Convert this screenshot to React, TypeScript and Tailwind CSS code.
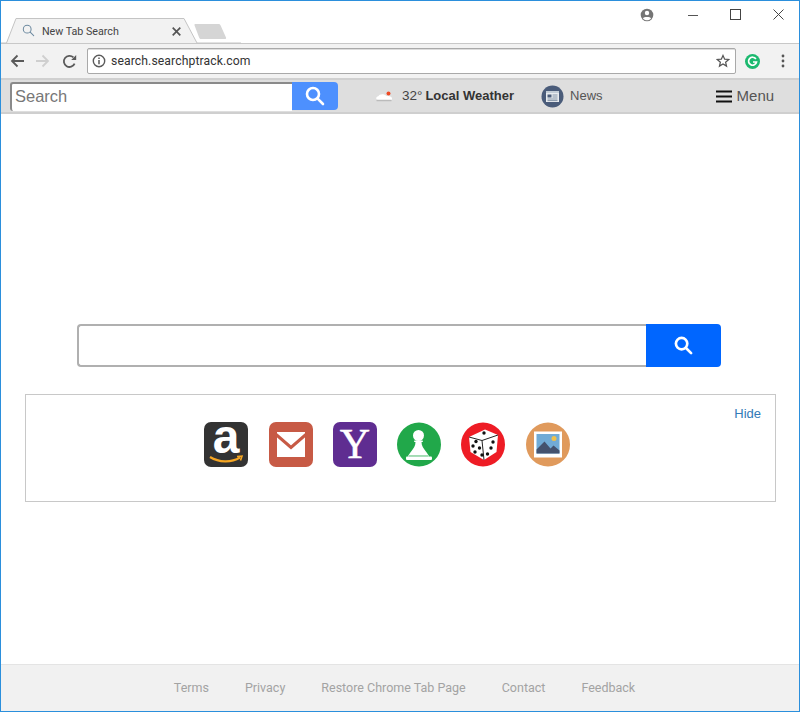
import React from "react";

const Sans = "font-['Liberation_Sans',Arial,sans-serif]";

function Glass({ size, color, sw = 2.6 }: { size: number; color: string; sw?: number }) {
  return (
    <svg width={size} height={size} viewBox="0 0 20 20" fill="none" stroke={color} strokeWidth={sw} strokeLinecap="round">
      <circle cx="8" cy="8" r="6" />
      <path d="M12.6 12.6L18 18" />
    </svg>
  );
}

function TabStrip() {
  return (
    <div className="relative h-[42px] shrink-0 bg-white">
      <svg className="absolute left-0 top-[16px]" width="240" height="27" viewBox="0 0 240 27">
        <path d="M-1 26H5.5L15 1.500H183L196 26H240" fill="#f2f2f2" stroke="#c4c4c4" strokeWidth="1" />
        <path d="M194.500 7c-.8 0-1.200.5-1 1.200l4.500 12c.4 1 1 1.800 2 1.800h24c1 0 1.400-.8 1-1.600l-5.500-12.200c-.4-.8-1-1.200-1.800-1.200z" fill="#d5d5d5" />
      </svg>
      <div className="relative flex h-[42px] items-start pl-[21px] pt-[22px]">
        <span className="mt-px"><Glass size={13} color="#6d8aa0" sw={1.6} /></span>
        <span className="ml-[7px] font-['Roboto',sans-serif] text-[10.7px] leading-[17px] text-[#444]">New Tab Search</span>
        <svg className="ml-[53px] mt-[4px]" width="9" height="9" viewBox="0 0 9 9" stroke="#555" strokeWidth="1.7">
          <path d="M.7.7l7.600 7.600M8.300.7L.7 8.300" />
        </svg>
      </div>
      <div className="absolute right-[145px] top-[7px]">
        <svg width="14" height="14" viewBox="0 0 14 14">
          <circle cx="7" cy="7" r="6.300" fill="#757575" />
          <circle cx="7" cy="5" r="2.200" fill="#fff" />
          <path d="M2.900 10.200c1-1.600 7.200-1.600 8.200 0-1 1.400-2.400 2.100-4.100 2.100s-3.100-.7-4.100-2.100z" fill="#fff" />
        </svg>
      </div>
      <div className="absolute right-[15px] top-[8px] flex items-center gap-[32px]">
        <svg width="10" height="10" viewBox="0 0 10 10"><path d="M0 5.500h10" stroke="#555" strokeWidth="1" /></svg>
        <svg width="11" height="11" viewBox="0 0 11 11"><rect x=".5" y=".5" width="10" height="10" fill="none" stroke="#444" strokeWidth="1" /></svg>
        <svg width="11" height="11" viewBox="0 0 11 11"><path d="M.5.5l10 10M10.500.5l-10 10" stroke="#444" strokeWidth="1" /></svg>
      </div>
    </div>
  );
}

function Toolbar() {
  return (
    <div className="flex h-[35px] shrink-0 items-center border-t border-[#c8c8c8] bg-[#f2f2f2] pl-[9px]">
      <svg width="14" height="14" viewBox="0 0 14 14" fill="none" stroke="#5a5a5a" strokeWidth="1.800">
        <path d="M14 7H2M7.500 1.500L2 7l5.500 5.500" />
      </svg>
      <svg className="ml-[12px]" width="14" height="14" viewBox="0 0 14 14" fill="none" stroke="#cfcfcf" strokeWidth="1.800">
        <path d="M0 7h12M6.500 1.500L12 7l-5.500 5.500" />
      </svg>
      <svg className="ml-[12px]" width="15" height="15" viewBox="0 0 15 15" fill="none">
        <path d="M12.600 9.600A5.600 5.600 0 1 1 11.400 3.400" stroke="#5a5a5a" strokeWidth="1.800" />
        <path d="M9.200 6h5V1z" fill="#5a5a5a" />
      </svg>
      <div className="ml-[10px] flex h-[26px] w-[649px] items-center rounded-[2px] border border-[#a9a9a9] bg-white pl-[4px] pr-[5px] shadow-[inset_0_1px_0_#ddd]">
        <svg width="14" height="14" viewBox="0 0 14 14" fill="none" stroke="#5a5a5a">
          <circle cx="7" cy="7" r="5.700" strokeWidth="1.400" />
          <path d="M7 6v4.200" strokeWidth="1.500" />
          <path d="M7 3.600v1.400" strokeWidth="1.500" />
        </svg>
        <span className="ml-[5px] font-['Roboto',sans-serif] text-[12.2px] text-[#333] tracking-[0.1px]">search.searchptrack.com</span>
        <svg className="ml-auto" width="14" height="14" viewBox="0 0 15 15" fill="none" stroke="#555" strokeWidth="1.300">
          <path d="M7.500 1.500l1.800 4 4.300.4-3.300 2.900 1 4.200-3.800-2.300-3.800 2.300 1-4.200L1.400 5.900l4.300-.4z" />
        </svg>
      </div>
      <svg className="ml-[9px]" width="15" height="15" viewBox="0 0 15 15">
        <circle cx="7.500" cy="7.500" r="7.500" fill="#1cb96f" />
        <path d="M10.900 5a4 4 0 1 0 .6 3H8" fill="none" stroke="#fff" strokeWidth="1.700" />
      </svg>
      <svg className="ml-[21px]" width="4" height="14" viewBox="0 0 4 14" fill="#555">
        <circle cx="2" cy="2" r="1.400" /><circle cx="2" cy="7" r="1.400" /><circle cx="2" cy="12" r="1.400" />
      </svg>
    </div>
  );
}

function SearchBar() {
  return (
    <div className={`flex h-[36px] shrink-0 items-center border-y-2 border-t-[#d0d0d0] border-b-[#cfcfcf] bg-[#dedede] pl-[9px] ${Sans}`}>
      <div className="flex h-[29px] w-[282px] items-center rounded-l-[3px] border-l-2 border-t-2 border-[#8a8a8a] bg-white pb-[2px] pl-[3px] text-[16.5px] text-[#777]">Search</div>
      <div className="flex h-[28px] w-[46px] items-center justify-center rounded-r-[4px] bg-[#4d90fe]">
        <Glass size={20} color="#fff" />
      </div>
      <svg className="ml-[37px]" width="18" height="14" viewBox="0 0 18 14">
        <circle cx="13.500" cy="4.500" r="2" fill="#ef4a24" />
        <path d="M3 11c-2.400 0-2.400-3.500.3-3.700C4.500 5 9 4.500 11.500 7c2.500 0 5.500.5 5.500 2.500S16 11 14.500 11z" fill="#fff" />
        <path d="M1.500 11.500h15" stroke="#bbb" strokeWidth="1.500" />
      </svg>
      <span className="ml-[9px] text-[13.5px] text-[#444]">32°</span>
      <span className="ml-[3px] text-[13px] font-bold text-[#333]">Local Weather</span>
      <svg className="ml-[27px]" width="23" height="23" viewBox="0 0 23 23">
        <circle cx="11.500" cy="11.500" r="11" fill="#4a5c7a" />
        <rect x="5" y="6" width="13" height="11" fill="#e8ecef" />
        <path d="M5 6h13v2H5z" fill="#c3cdd6" />
        <rect x="6.500" y="9.500" width="4" height="3" fill="#4a5c7a" />
        <path d="M11.500 10h5M11.500 12h5M6.500 14h10M6.500 15.600h10" stroke="#8696a8" strokeWidth="1" />
      </svg>
      <span className="ml-[6px] text-[13px] text-[#555]">News</span>
      <svg className="ml-[113px]" width="16" height="13" viewBox="0 0 16 13" fill="#111">
        <rect y="0.500" width="16" height="2" /><rect y="5.500" width="16" height="2" /><rect y="10.500" width="16" height="2" />
      </svg>
      <span className="ml-[5px] text-[15px] text-[#555]">Menu</span>
    </div>
  );
}

function Shortcuts() {
  return (
    <div className="flex">
      <svg className="overflow-visible" width="44" height="45" viewBox="0 0 44 45">
        <rect width="44" height="45" rx="7" fill="#333" />
        <text x="22" y="31" fontFamily="'Liberation Sans',sans-serif" fontSize="48" fontWeight="700" fill="#fff" textAnchor="middle">a</text>
        <path d="M6 35c9 5.500 21 6 30 .5" fill="none" stroke="#f5a623" strokeWidth="2.200" />
        <path d="M33 34.500l5-.3-1.500 4.300" fill="none" stroke="#f5a623" strokeWidth="1.600" />
      </svg>
      <svg className="ml-[21px]" width="44" height="45" viewBox="0 0 44 45">
        <rect width="44" height="45" rx="7" fill="#c75a45" />
        <rect x="8" y="10" width="28" height="25" fill="#fff" />
        <path d="M6.500 12L22 25.500L37.500 12" fill="none" stroke="#c75a45" strokeWidth="3" />
      </svg>
      <svg className="ml-[20px] overflow-visible" width="44" height="45" viewBox="0 0 44 45">
        <rect width="44" height="45" rx="7" fill="#5f2d91" />
        <text x="22" y="36" fontFamily="'Liberation Serif',serif" fontSize="42" fontWeight="400" fill="#fff" stroke="#fff" strokeWidth=".5" textAnchor="middle">Y</text>
      </svg>
      <svg className="ml-[20px]" width="44" height="45" viewBox="0 0 44 45">
        <circle cx="22" cy="22.500" r="22" fill="#21a84a" />
        <circle cx="21.500" cy="13.500" r="5.500" fill="#fff" />
        <rect x="17" y="18.500" width="9" height="1.500" rx=".7" fill="#fff" />
        <path d="M18.500 20h6c0 4 2 6.500 4 9 2 2.500 3 4 3.500 5.500H11c.5-1.500 1.500-3 3.500-5.500 2-2.500 4-5 4-9z" fill="#fff" />
        <rect x="9" y="34.500" width="26" height="3.500" rx="1" fill="#fff" />
        <path d="M12 33.800h19" stroke="#21a84a" strokeWidth=".6" />
      </svg>
      <svg className="ml-[20px]" width="44" height="45" viewBox="0 0 44 45">
        <circle cx="22" cy="22.500" r="22" fill="#ee1c25" />
        <path d="M8 15L24 7.500 37 13l-1.500 17L23 38 9.500 30z" fill="#fff" />
        <path d="M21 18.500L8 15M21 18.500L37 13M21 18.500L23 38" stroke="#222" strokeWidth="1" fill="none" />
        <g fill="#111">
          <circle cx="23" cy="11" r="1.700" /><circle cx="15" cy="19.500" r="1.700" /><circle cx="12" cy="24" r="1.700" />
          <circle cx="18.500" cy="26" r="1.700" /><circle cx="14" cy="30" r="1.700" /><circle cx="21" cy="33" r="1.700" />
          <circle cx="32" cy="20" r="1.700" /><circle cx="26.500" cy="32" r="1.700" /><circle cx="30" cy="26" r="1.700" />
        </g>
      </svg>
      <svg className="ml-[21px]" width="44" height="45" viewBox="0 0 44 45">
        <circle cx="22" cy="22.500" r="22" fill="#e09a5c" />
        <rect x="8" y="9.500" width="28" height="26" fill="#fff" />
        <rect x="10.500" y="12" width="23" height="19.500" fill="#71abd6" />
        <circle cx="28" cy="16.500" r="2.500" fill="#f0c14b" />
        <path d="M10.500 31.500v-4l8-8 6 7 3-3 6 5v3z" fill="#44526e" />
      </svg>
    </div>
  );
}

export default function App() {
  return (
    <div className={`flex h-[712px] w-[800px] flex-col overflow-hidden border border-[#2b8fdc] bg-white ${Sans}`}>
      <TabStrip />
      <Toolbar />
      <SearchBar />
      <main className="flex min-h-0 flex-1 flex-col pt-[210px]">
        <div className="ml-[76px] flex h-[43px] w-[644px]">
          <div className="flex-1 rounded-l-[4px] border-2 border-r-0 border-[#b0b0b0] bg-white" />
          <div className="flex w-[75px] items-center justify-center rounded-r-[4px] bg-[#0066ff]">
            <Glass size={19} color="#fff" sw={2.800} />
          </div>
        </div>
        <section className="relative ml-[24px] mt-[27px] flex h-[108px] w-[751px] items-start border border-[#c8c8c8] pl-[178px] pt-[27px]">
          <Shortcuts />
          <a className="absolute right-[14px] top-[9px] text-[13px] leading-[20px] text-[#337ab7]">Hide</a>
        </section>
      </main>
      <footer className="flex h-[47px] shrink-0 items-center justify-center gap-[36px] border-t border-[#e4e4e4] bg-[#f1f1f1] pl-[9px] font-['Roboto',sans-serif] text-[12.5px] text-[#a3a3a3]">
        <span>Terms</span>
        <span>Privacy</span>
        <span>Restore Chrome Tab Page</span>
        <span>Contact</span>
        <span>Feedback</span>
      </footer>
    </div>
  );
}
